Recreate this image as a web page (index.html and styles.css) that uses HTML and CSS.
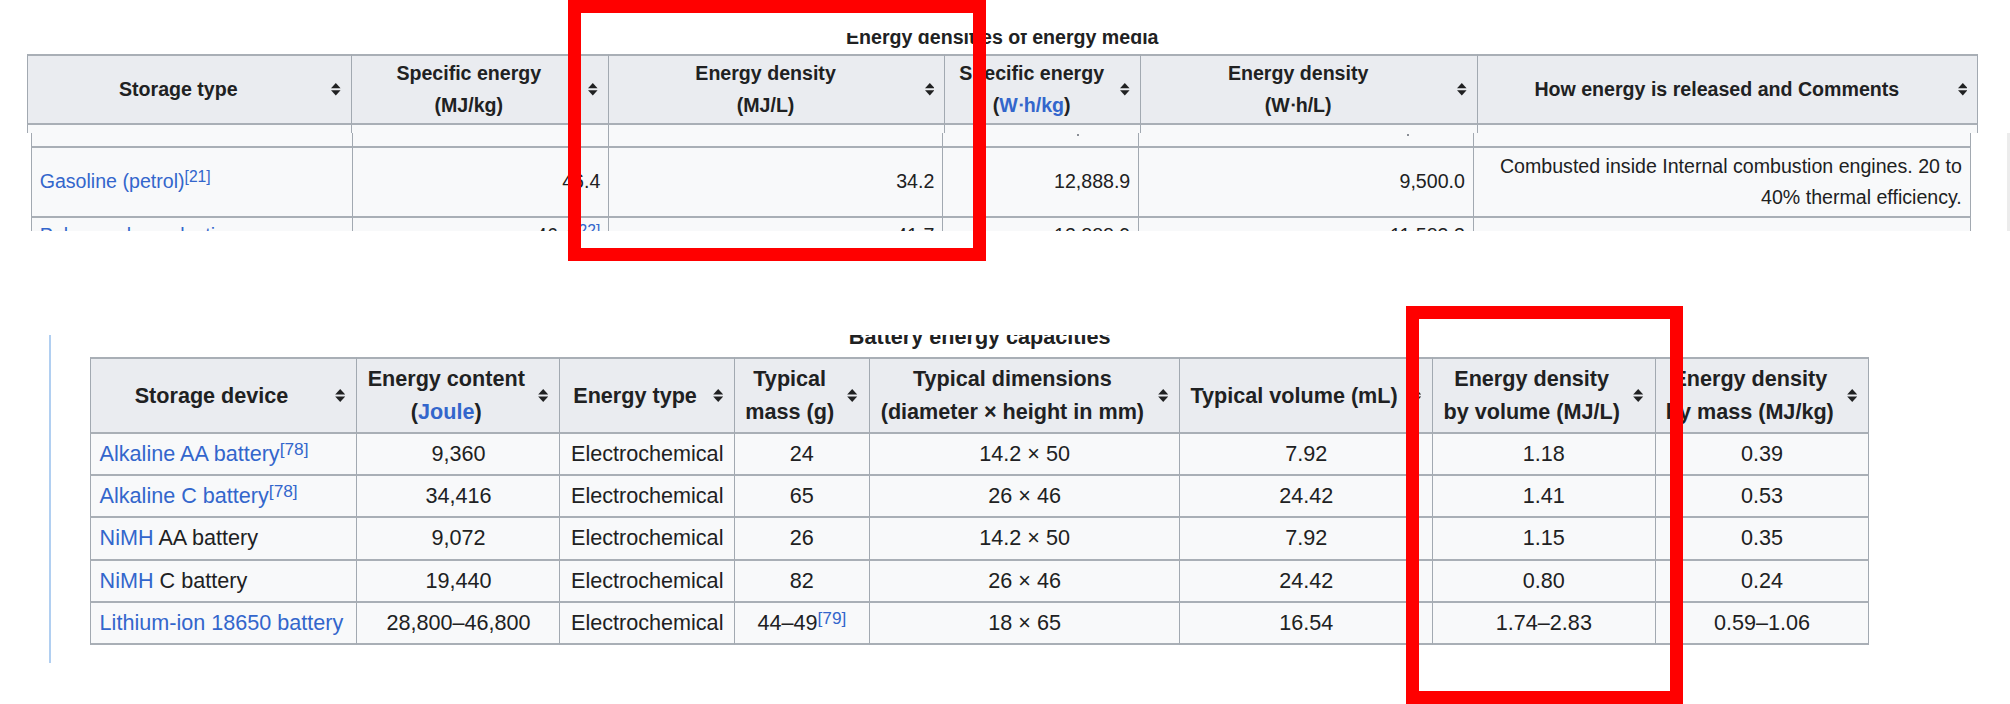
FILE: index.html
```html
<!DOCTYPE html>
<html lang="en">
<head>
<meta charset="utf-8">
<title>Energy density tables</title>
<link rel="stylesheet" href="styles.css">
</head>
<body>

<section class="sec-a">
  <div class="cap1">Energy densities of energy media</div>
  <table class="wt t1 t1h">
    <colgroup>
      <col class="h1"><col class="h2"><col class="h3"><col class="h4"><col class="h5"><col class="h6">
    </colgroup>
    <thead>
      <tr>
        <th><div class="hc"><div class="ht">Storage type</div><span class="sort"><svg viewBox="0 0 10 13"><path d="M0 5.5L5 0L10 5.5Z"/><path d="M0 7.5L10 7.5L5 13Z"/></svg></span></div></th>
        <th><div class="hc"><div class="ht">Specific energy<br>(MJ/kg)</div><span class="sort"><svg viewBox="0 0 10 13"><path d="M0 5.5L5 0L10 5.5Z"/><path d="M0 7.5L10 7.5L5 13Z"/></svg></span></div></th>
        <th><div class="hc"><div class="ht">Energy density<br>(MJ/L)</div><span class="sort"><svg viewBox="0 0 10 13"><path d="M0 5.5L5 0L10 5.5Z"/><path d="M0 7.5L10 7.5L5 13Z"/></svg></span></div></th>
        <th><div class="hc"><div class="ht">Specific energy<br>(<span class="lk">W⋅h/kg</span>)</div><span class="sort"><svg viewBox="0 0 10 13"><path d="M0 5.5L5 0L10 5.5Z"/><path d="M0 7.5L10 7.5L5 13Z"/></svg></span></div></th>
        <th><div class="hc"><div class="ht">Energy density<br>(W⋅h/L)</div><span class="sort"><svg viewBox="0 0 10 13"><path d="M0 5.5L5 0L10 5.5Z"/><path d="M0 7.5L10 7.5L5 13Z"/></svg></span></div></th>
        <th><div class="hc"><div class="ht">How energy is released and Comments</div><span class="sort"><svg viewBox="0 0 10 13"><path d="M0 5.5L5 0L10 5.5Z"/><path d="M0 7.5L10 7.5L5 13Z"/></svg></span></div></th>
      </tr>
    </thead>
    <tbody>
      <tr class="strip">
        <td><div class="sh8"></div></td><td><div class="sh8"></div></td><td><div class="sh8"></div></td><td><div class="sh8"></div></td><td><div class="sh8"></div></td><td><div class="sh8"></div></td>
      </tr>
    </tbody>
  </table>
  <div class="bodyrow">
    <table class="wt t1 t1b">
      <colgroup>
        <col class="b1"><col class="b2"><col class="b3"><col class="b4"><col class="b5"><col class="b6">
      </colgroup>
      <tbody>
        <tr class="strip2">
          <td><div class="sh12"></div></td>
          <td><div class="sh12"></div></td>
          <td><div class="sh12"></div></td>
          <td><div class="sh12"><span class="tick t4"></span></div></td>
          <td><div class="sh12"><span class="tick t5"></span></div></td>
          <td><div class="sh12"></div></td>
        </tr>
        <tr>
          <td class="l"><span class="lk">Gasoline (petrol)</span><sup class="ref">[21]</sup></td>
          <td class="r">46.4</td>
          <td class="r">34.2</td>
          <td class="r">12,888.9</td>
          <td class="r">9,500.0</td>
          <td class="r">Combusted inside Internal combustion engines. 20 to 40% thermal efficiency.</td>
        </tr>
        <tr>
          <td class="l"><span class="lk">Polypropylene plastic</span></td>
          <td class="r">46.4<sup class="ref">[22]</sup></td>
          <td class="r">41.7</td>
          <td class="r">12,888.9</td>
          <td class="r">11,583.3</td>
          <td class="r"></td>
        </tr>
      </tbody>
    </table>
    <div class="edge"></div>
  </div>
</section>

<section class="sec-b">
  <div class="cap2">Battery energy capacities</div>
  <table class="wt t2">
    <colgroup>
      <col class="k1"><col class="k2"><col class="k3"><col class="k4"><col class="k5"><col class="k6"><col class="k7"><col class="k8">
    </colgroup>
    <thead>
      <tr>
        <th><div class="hc"><div class="ht">Storage device</div><span class="sort"><svg viewBox="0 0 10 13"><path d="M0 5.5L5 0L10 5.5Z"/><path d="M0 7.5L10 7.5L5 13Z"/></svg></span></div></th>
        <th><div class="hc"><div class="ht">Energy content<br>(<span class="lk">Joule</span>)</div><span class="sort"><svg viewBox="0 0 10 13"><path d="M0 5.5L5 0L10 5.5Z"/><path d="M0 7.5L10 7.5L5 13Z"/></svg></span></div></th>
        <th><div class="hc"><div class="ht">Energy type</div><span class="sort"><svg viewBox="0 0 10 13"><path d="M0 5.5L5 0L10 5.5Z"/><path d="M0 7.5L10 7.5L5 13Z"/></svg></span></div></th>
        <th><div class="hc"><div class="ht">Typical<br>mass (g)</div><span class="sort"><svg viewBox="0 0 10 13"><path d="M0 5.5L5 0L10 5.5Z"/><path d="M0 7.5L10 7.5L5 13Z"/></svg></span></div></th>
        <th><div class="hc"><div class="ht">Typical dimensions<br>(diameter × height in mm)</div><span class="sort"><svg viewBox="0 0 10 13"><path d="M0 5.5L5 0L10 5.5Z"/><path d="M0 7.5L10 7.5L5 13Z"/></svg></span></div></th>
        <th><div class="hc"><div class="ht">Typical volume (mL)</div><span class="sort"><svg viewBox="0 0 10 13"><path d="M0 5.5L5 0L10 5.5Z"/><path d="M0 7.5L10 7.5L5 13Z"/></svg></span></div></th>
        <th><div class="hc"><div class="ht">Energy density<br>by volume (MJ/L)</div><span class="sort"><svg viewBox="0 0 10 13"><path d="M0 5.5L5 0L10 5.5Z"/><path d="M0 7.5L10 7.5L5 13Z"/></svg></span></div></th>
        <th><div class="hc"><div class="ht">Energy density<br>by mass (MJ/kg)</div><span class="sort"><svg viewBox="0 0 10 13"><path d="M0 5.5L5 0L10 5.5Z"/><path d="M0 7.5L10 7.5L5 13Z"/></svg></span></div></th>
      </tr>
    </thead>
    <tbody>
      <tr>
        <td class="l"><span class="lk">Alkaline AA battery</span><sup class="ref">[78]</sup></td>
        <td>9,360</td><td>Electrochemical</td><td>24</td><td>14.2 × 50</td><td>7.92</td><td>1.18</td><td>0.39</td>
      </tr>
      <tr>
        <td class="l"><span class="lk">Alkaline C battery</span><sup class="ref">[78]</sup></td>
        <td>34,416</td><td>Electrochemical</td><td>65</td><td>26 × 46</td><td>24.42</td><td>1.41</td><td>0.53</td>
      </tr>
      <tr>
        <td class="l"><span class="lk">NiMH</span> AA battery</td>
        <td>9,072</td><td>Electrochemical</td><td>26</td><td>14.2 × 50</td><td>7.92</td><td>1.15</td><td>0.35</td>
      </tr>
      <tr>
        <td class="l"><span class="lk">NiMH</span> C battery</td>
        <td>19,440</td><td>Electrochemical</td><td>82</td><td>26 × 46</td><td>24.42</td><td>0.80</td><td>0.24</td>
      </tr>
      <tr>
        <td class="l"><span class="lk">Lithium-ion 18650 battery</span></td>
        <td>28,800–46,800</td><td>Electrochemical</td><td>44–49<sup class="ref">[79]</sup></td><td>18 × 65</td><td>16.54</td><td>1.74–2.83</td><td>0.59–1.06</td>
      </tr>
    </tbody>
  </table>
</section>

<div class="mark mark-1"></div>
<div class="mark mark-2"></div>

</body>
</html>
```

FILE: styles.css
```css
html, body {
  margin: 0;
  padding: 0;
  overflow: hidden;
  background: #ffffff;
}

body {
  position: relative;
  width: 2010px;
  height: 704px;
  font-family: "Liberation Sans", Arial, sans-serif;
  color: #202122;
}

/* ---------- generic wikitable ---------- */
table.wt {
  border-collapse: separate;
  border-spacing: 0;
  table-layout: fixed;
}

.wt th,
.wt td {
  border-right: 1px solid #a2a9b1;
  border-bottom: 2px solid #a9afb6;
}

.wt tr > :first-child {
  border-left: 1px solid #a2a9b1;
}

.wt thead th {
  border-top: 2px solid #a9afb6;
  background: #eaecf0;
  font-weight: bold;
  text-align: center;
}

.wt td {
  background: #f8f9fa;
}

.wt td.l { text-align: left; }
.wt td.r { text-align: right; }

.lk { color: #3366cc; }

.ref {
  font-size: 80%;
  line-height: 1;
  vertical-align: 6px;
  color: #3366cc;
  font-weight: normal;
}

/* header cell inner layout */
.hc {
  display: flex;
  align-items: center;
}

.ht {
  flex: 1;
  min-width: 0;
  text-align: center;
}

.sort {
  flex: none;
  display: flex;
  justify-content: center;
  align-items: center;
}

.sort svg {
  display: block;
  fill: #202122;
}

/* ---------- section A: energy media table ---------- */
.sec-a {
  margin-top: 33px;
  height: 197.7px;
  overflow: hidden;
}

.cap1 {
  width: 1951.5px;
  margin: -11.4px 0 1.1px 26.5px;
  height: 31.3px;
  line-height: 31.3px;
  font-size: 19.6px;
  font-weight: bold;
  text-align: center;
}

.t1 {
  font-size: 19.6px;
  line-height: 31.3px;
}

.t1 th {
  padding: 2.4px 0 2.4px 8px;
}

.t1 td {
  padding: 2.6px 8px;
}

.t1 .sort { width: 29.4px; }
.t1 .sort svg { width: 9.6px; height: 12.4px; }

.t1h {
  width: 1951.5px;
  margin-left: 26.5px;
}

.h1 { width: 325px; }
.h2 { width: 257px; }
.h3 { width: 336.5px; }
.h4 { width: 195.7px; }
.h5 { width: 337.3px; }
.h6 { width: 500px; }

.t1 tr.strip td {
  padding: 0;
  border-bottom: 0;
}

.sh8 { height: 8px; }

.t1 tr.strip2 td {
  padding: 0;
  line-height: 0;
  vertical-align: top;
}

.sh12 { height: 11.6px; }

.tick {
  display: block;
  width: 2px;
  height: 2px;
  margin: 1px 0 0 auto;
  background: #8a8f96;
}

.tick.t4 { margin-right: 59px; }
.tick.t5 { margin-right: 64px; }

.bodyrow {
  display: flex;
  padding-left: 30.7px;
}

.t1b {
  width: 1940.1px;
  flex: none;
}

.b1 { width: 322.6px; }
.b2 { width: 256px; }
.b3 { width: 334px; }
.b4 { width: 196px; }
.b5 { width: 334.6px; }
.b6 { width: 496.9px; }

.edge {
  margin-left: auto;
  width: 3px;
  background: #ececec;
}

/* ---------- section B: battery table ---------- */
.sec-b {
  margin: 104.3px 0 0 49px;
  height: 328px;
  overflow: hidden;
  border-left: 2px solid #b1cff1;
  padding-left: 39px;
}

.cap2 {
  width: 1779.4px;
  margin: -13.5px 0 4px 0;
  height: 32px;
  line-height: 32px;
  font-size: 21.6px;
  font-weight: bold;
  text-align: center;
}

.t2 {
  width: 1779.4px;
  font-size: 21.6px;
  line-height: 32.2px;
}

.t2 th {
  padding: 4px 0 4px 8px;
}

.t2 td {
  padding: 4px 8.6px;
  text-align: center;
}

.t2 .sort { width: 32.4px; }
.t2 .sort svg { width: 10.4px; height: 13px; }

.k1 { width: 267.4px; }
.k2 { width: 203.1px; }
.k3 { width: 174.5px; }
.k4 { width: 134.8px; }
.k5 { width: 310.6px; }
.k6 { width: 252.8px; }
.k7 { width: 222.4px; }
.k8 { width: 213.8px; }

/* ---------- red highlight boxes (annotation overlay) ---------- */
.mark {
  position: absolute;
  box-sizing: border-box;
  border: 13px solid #ff0000;
}

.mark-1 {
  left: 568px;
  top: 0;
  width: 418px;
  height: 260.7px;
}

.mark-2 {
  left: 1406px;
  top: 306px;
  width: 276.5px;
  height: 398px;
}
```
